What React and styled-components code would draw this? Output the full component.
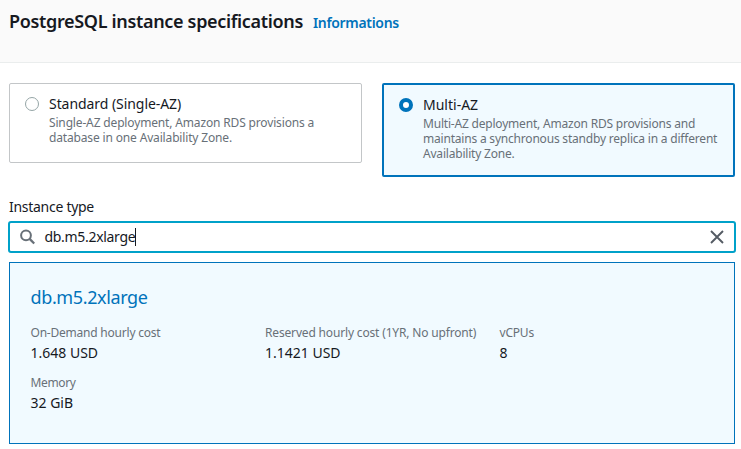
import React from 'react';
import styled, { createGlobalStyle } from 'styled-components';

const GlobalStyle = createGlobalStyle`
  * { box-sizing: border-box; }
  body {
    margin: 0;
    background: #fff;
    color: #16191f;
    font: 14px/20px "Noto Sans", "Open Sans", sans-serif;
  }
`;

const Page = styled.main`
  width: 741px;
  height: 449px;
  overflow: hidden;
`;

const Header = styled.header`
  display: flex;
  align-items: baseline;
  gap: 10px;
  height: 63px;
  padding: 9px 9px 0;
  background: #fafafa;
  border-bottom: 1px solid #eaeded;
`;

const Heading = styled.h2`
  margin: 0;
  font-size: 18px;
  line-height: 24px;
  font-weight: 600;
  letter-spacing: -0.33px;
  white-space: nowrap;
`;

const InfoLink = styled.a`
  color: #0073bb;
  font-weight: 600;
  letter-spacing: -0.33px;
`;

const Content = styled.section`
  padding: 20px 6px 0 9px;
`;

const Tiles = styled.div`
  display: grid;
  grid-template-columns: 353px 353px;
  column-gap: 20px;
  align-items: start;
`;

const Tile = styled.label`
  display: flex;
  gap: 10px;
  height: ${(p) => (p.$selected ? 94 : 80)}px;
  padding: 10px 10px 0 15px;
  border: ${(p) => (p.$selected ? '2px solid #0073bb' : '1px solid #c3c6c8')};
  border-radius: 2px;
  background: ${(p) => (p.$selected ? '#f1faff' : '#fff')};
`;

const Radio = styled.span`
  flex: none;
  width: 14px;
  height: 14px;
  margin-top: 3px;
  border: ${(p) => (p.$checked ? '4px solid #0073bb' : '1px solid #95a5a6')};
  border-radius: 50%;
  background: #fff;
`;

const TileTitle = styled.div`
  letter-spacing: ${(p) => p.$tracking || 0}px;
`;

const TileText = styled.div`
  margin-top: 1px;
  color: #687078;
  font-size: 12px;
  line-height: 15px;
  letter-spacing: ${(p) => p.$tracking}px;
  white-space: nowrap;
`;

const FieldLabel = styled.div`
  margin-top: 20px;
  letter-spacing: -0.28px;
`;

const SearchBox = styled.div`
  display: flex;
  align-items: center;
  height: 32px;
  margin: 4px -1px 0;
  padding: 0 10px;
  border: 2px solid #00a1c9;
  border-radius: 3px;
`;

const Query = styled.span`
  margin-left: 8.5px;
  letter-spacing: -0.31px;
`;

const Caret = styled.span`
  width: 1px;
  height: 18px;
  background: #16191f;
`;

const ClearIcon = styled.svg`
  margin-left: auto;
`;

const Result = styled.article`
  height: 182px;
  margin-top: 9px;
  padding: 22px 0 0 20.5px;
  border: 1px solid #0073bb;
  background: #f1faff;
`;

const ResultTitle = styled.h3`
  margin: 0 0 16px;
  color: #0073bb;
  font-size: 18px;
  font-weight: 400;
  line-height: 24px;
  letter-spacing: -0.38px;
`;

const Specs = styled.dl`
  display: grid;
  grid-template-columns: repeat(3, 234.5px);
  row-gap: 12px;
  margin: 0;
`;

const SpecName = styled.dt`
  color: #687078;
  font-size: 12px;
  line-height: 15px;
  letter-spacing: ${(p) => p.$tracking}px;
`;

const SpecValue = styled.dd`
  margin: 3px 0 0;
`;

const specs = [
  { name: 'On-Demand hourly cost', value: '1.648 USD', tracking: -0.22 },
  { name: 'Reserved hourly cost (1YR, No upfront)', value: '1.1421 USD', tracking: -0.165 },
  { name: 'vCPUs', value: '8', tracking: -0.2 },
  { name: 'Memory', value: '32 GiB', tracking: -0.36 },
];

export default function App() {
  return (
    <Page>
      <GlobalStyle />
      <Header>
        <Heading>PostgreSQL instance specifications</Heading>
        <InfoLink>Informations</InfoLink>
      </Header>
      <Content>
        <Tiles>
          <Tile>
            <Radio />
            <div>
              <TileTitle $tracking={-0.06}>Standard (Single-AZ)</TileTitle>
              <TileText $tracking={-0.155}>
                Single-AZ deployment, Amazon RDS provisions a<br />
                database in one Availability Zone.
              </TileText>
            </div>
          </Tile>
          <Tile $selected>
            <Radio $checked />
            <div>
              <TileTitle>Multi-AZ</TileTitle>
              <TileText $tracking={-0.2}>
                Multi-AZ deployment, Amazon RDS provisions and<br />
                maintains a synchronous standby replica in a different<br />
                Availability Zone.
              </TileText>
            </div>
          </Tile>
        </Tiles>
        <FieldLabel>Instance type</FieldLabel>
        <SearchBox>
          <svg width="16" height="16" viewBox="0 0 16 16" fill="none" stroke="#687078" strokeWidth="2">
            <circle cx="6" cy="6.3" r="4.9" />
            <path d="M9.6 9.9L14.2 14.5" strokeWidth="2.3" />
          </svg>
          <Query>db.m5.2xlarge</Query>
          <Caret />
          <ClearIcon width="14" height="14" viewBox="0 0 14 14" fill="none" stroke="#545b64" strokeWidth="1.9">
            <path d="M1 1L13 13M13 1L1 13" />
          </ClearIcon>
        </SearchBox>
        <Result>
          <ResultTitle>db.m5.2xlarge</ResultTitle>
          <Specs>
            {specs.map((s) => (
              <div key={s.name}>
                <SpecName $tracking={s.tracking}>{s.name}</SpecName>
                <SpecValue>{s.value}</SpecValue>
              </div>
            ))}
          </Specs>
        </Result>
      </Content>
    </Page>
  );
}
